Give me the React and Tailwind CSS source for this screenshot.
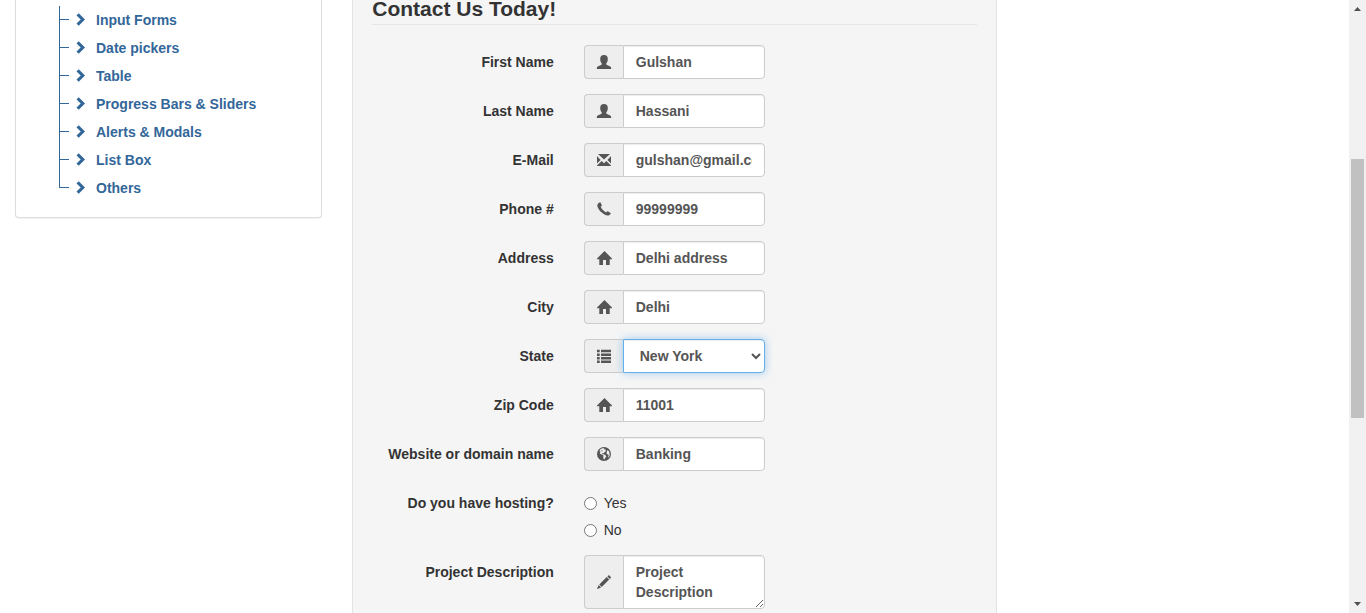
import React from "react";

const paths = {
  user: "M7 0C9.600 0 10.800 1.400 10.800 3.800c0 2-.500 3.500-1.500 4.500v1c0 .700 1 1 3 1.800C13.800 11.700 14.200 12.400 14.200 14H-.200c0-1.600.400-2.300 1.900-2.900C3.700 10.300 4.700 10 4.700 9.300v-1C3.700 7.300 3.200 5.800 3.200 3.800 3.200 1.400 4.400 0 7 0z",
  mail: "M1 1h12L7 6.500zM0 3 3.600 7 0 10.500zM14 3 10.400 7l3.600 3.500zM0 13v-.600L4.700 7.900 7 10.200 9.300 7.900 14 12.400V13z",
  phone:
    "M1.200 1.600C2 .600 3 0 3.300.300L4.900 3.300C5 3.700 4.200 4.400 3.700 4.800 4.600 7 6.800 9.400 9.200 10.400 9.600 9.800 10.400 9.100 10.700 9.200L13.700 11C14 11.300 13.300 12.400 12.400 13 11.300 13.900 9.500 13.700 7.500 12.600 4.600 11 1.900 8.200.800 5.600.100 4 .200 2.700 1.200 1.600z",
  home: "M7.500 0 15 7.500v.700H12.700V14H9V9H6V14H2.300V8.200H0v-.700z",
  list: "M0 .800h2.700v2.500H0zM4 .800h10v2.500H4zM0 4.400h2.700v2.500H0zM4 4.400h10v2.500H4zM0 8h2.700v2.500H0zM4 8h10v2.500H4zM0 11.500h2.700V14H0zM4 11.500h10V14H4z",
  globe:
    "M7 0a7 7 0 1 1 0 14A7 7 0 0 1 7 0zM7.200 1.200 5.300 1.300 3 2.600 2.500 4.300 3.600 4.600 2.700 6.300 3.900 7.200 5 7.600 6.500 8.600 6.200 10.500 6.900 12.600 7.600 12.300 8.300 10.800 9.400 9.300 8.200 8 6.800 7.300 5 7 5.300 6.200 7 5.900 7.800 4.700 9 4.200 8.600 2.600 7.300 2.700zM4.700 3l1 .500-.700 1-.700-.500zM10.700 2.900 9.800 4.600 9.600 6.400 10.500 7.500 11.700 7.700 11.400 9.500 11 10.900 12.300 9.400 12.800 7.300 12.200 6.200 12.500 5z",
  pencil:
    "M11.100.700c.500-.500 1-.500 1.500 0l1 1c.500.500.500 1 0 1.500l-.700.700-2.500-2.500zM9.700 2l2.500 2.500-7.400 7.400-2.500-2.500zM1.700 10.100l2.400 2.400L.300 14 0 13.700z",
  chevron: "M.500 2.400 2.700.300 9 6.500 2.700 12.700.500 10.600 4.700 6.500z",
};

function Icon({ name, className }) {
  return (
    <svg viewBox="0 0 14 14" className={className} fill="currentColor" fillRule="evenodd" overflow="visible" aria-hidden="true">
      <path d={paths[name]} />
    </svg>
  );
}

const links = [
  "Input Forms",
  "Date pickers",
  "Table",
  "Progress Bars & Sliders",
  "Alerts & Modals",
  "List Box",
  "Others",
];

const fields = [
  { id: "first_name", label: "First Name", icon: "user", value: "Gulshan" },
  { id: "last_name", label: "Last Name", icon: "user", value: "Hassani" },
  { id: "email", label: "E-Mail", icon: "mail", value: "gulshan@gmail.com" },
  { id: "phone", label: "Phone #", icon: "phone", value: "99999999" },
  { id: "address", label: "Address", icon: "home", value: "Delhi address" },
  { id: "city", label: "City", icon: "home", value: "Delhi" },
  { id: "state", label: "State", icon: "list", value: "New York", type: "select" },
  { id: "zip", label: "Zip Code", icon: "home", value: "11001" },
  { id: "website", label: "Website or domain name", icon: "globe", value: "Banking" },
];

const control =
  "block min-w-0 flex-1 rounded-r border bg-white px-3 py-[6px] text-sm leading-5 font-bold text-[#555] outline-none";
const plain = "border-[#ccc] shadow-[inset_0_1px_1px_rgba(0,0,0,0.075)]";
const active =
  "border-[#66afe9] shadow-[inset_0_1px_1px_rgba(0,0,0,0.075),0_0_8px_rgba(102,175,233,0.6)]";

function Row({ children }) {
  return <div className="-mx-[15px] mb-[15px] grid grid-cols-3">{children}</div>;
}

const labelClass = "px-[15px] pt-[7px] text-right leading-5 font-bold whitespace-nowrap";

function Group({ icon, children }) {
  return (
    <div className="flex px-[15px]">
      <span className="flex shrink-0 items-center rounded-l border border-r-0 border-[#ccc] bg-[#eee] px-3 text-[#555]">
        <Icon name={icon} className="size-[14px]" />
      </span>
      {children}
    </div>
  );
}

function Field({ id, label, icon, value, type }) {
  return (
    <Row>
      <label htmlFor={id} className={labelClass}>{label}</label>
      <Group icon={icon}>
        {type === "select" ? (
          <select id={id} defaultValue={value} className={`${control} ${active} h-[34px]`}>
            <option>New Jersey</option>
            <option>New York</option>
            <option>North Carolina</option>
          </select>
        ) : (
          <input id={id} type="text" defaultValue={value} className={`${control} ${plain} h-[34px]`} />
        )}
      </Group>
    </Row>
  );
}

function Sidebar() {
  return (
    <aside className="px-[15px]">
      <nav className="rounded-b border border-t-0 border-[#ddd] bg-white pt-[6px] pb-[15px] pl-[43px] shadow-[0_1px_1px_rgba(0,0,0,0.05)]">
        <ul>
          {links.map((text, i) => (
            <li key={text} className="flex h-7 text-[#369]">
              <span className={`w-[10px] border-[#369] ${i < links.length - 1 ? "border-l" : ""}`}>
                <span className={`block h-[14px] border-b border-[#369] ${i === links.length - 1 ? "border-l" : ""}`} />
              </span>
              <a href="#" className="flex items-center gap-[6px] pl-[7px] leading-5 font-bold whitespace-nowrap">
                <Icon name="chevron" className="size-[14px]" />
                {text}
              </a>
            </li>
          ))}
        </ul>
      </nav>
    </aside>
  );
}

function ScrollRail() {
  return (
    <div className="flex w-[17px] shrink-0 flex-col items-center bg-[#f1f1f1] text-[#505050]" aria-hidden="true">
      <svg viewBox="0 0 17 17" className="h-[17px] w-[17px] shrink-0" fill="currentColor">
        <path d="M8.500 7 12 11H5z" />
      </svg>
      <div className="grow-[142]" />
      <div className="w-[13px] grow-[259] bg-[#c1c1c1]" />
      <div className="grow-[178]" />
      <svg viewBox="0 0 17 17" className="h-[17px] w-[17px] shrink-0" fill="currentColor">
        <path d="M5 6h7L8.500 10z" />
      </svg>
    </div>
  );
}

export default function App() {
  return (
    <div className="flex h-screen overflow-hidden bg-white font-['Liberation_Sans',Arial,sans-serif] text-sm text-[#333]">
      <div className="grid min-w-0 flex-1 grid-cols-4 overflow-hidden">
        <Sidebar />
        <main className="col-span-2 px-[15px]">
          <form className="min-h-full border-x border-[#e3e3e3] bg-[#f5f5f5] px-[19px]">
            <h2 className="mb-5 border-b border-[#e5e5e5] pb-[6px] text-[21px] leading-[18px] font-bold">
              Contact Us Today!
            </h2>
            {fields.map((f) => (
              <Field key={f.id} {...f} />
            ))}
            <Row>
              <span id="hosting" className={labelClass}>Do you have hosting?</span>
              <div role="radiogroup" aria-labelledby="hosting" className="px-[15px]">
                {["Yes", "No"].map((v) => (
                  <label key={v} className="flex items-center gap-[7px] pt-[7px] leading-5">
                    <input type="radio" name="hosting" value={v} className="size-[13px]" />
                    {v}
                  </label>
                ))}
              </div>
            </Row>
            <Row>
              <label htmlFor="comment" className={labelClass}>Project Description</label>
              <Group icon="pencil">
                <textarea id="comment" rows={2} defaultValue="Project Description" className={`${control} ${plain}`} />
              </Group>
            </Row>
          </form>
        </main>
      </div>
      <ScrollRail />
    </div>
  );
}
